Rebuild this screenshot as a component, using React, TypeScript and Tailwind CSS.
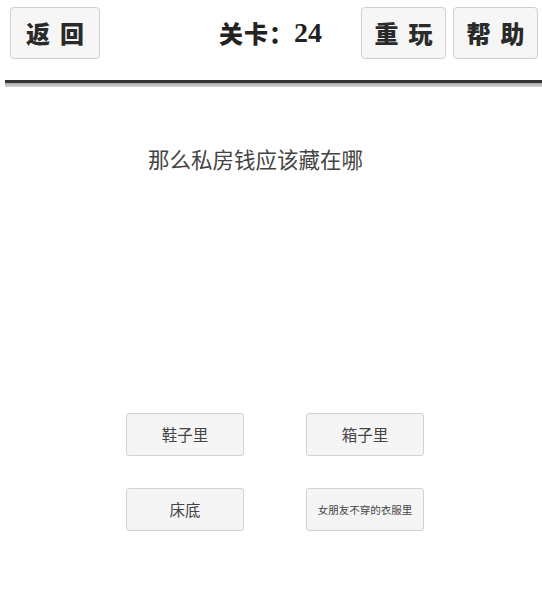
import React from 'react';

const cjk = { fontFamily: '"Noto Sans CJK SC", "Noto Sans", sans-serif' };
const heavy = { fontFamily: '"Liberation Serif", "Noto Sans CJK SC", serif' };

const TopButton = ({ label, className }: { label: string; className: string }) => (
  <button
    className={`h-[52px] flex items-center justify-center bg-[#f6f6f6] border border-[#cfcfcf] rounded-[4px] text-[#2a2a2a] text-[24px] font-black tracking-[10px] ${className}`}
    style={cjk}
  >
    <span className="pl-[10px]">{label}</span>
  </button>
);

const Option = ({ label, small }: { label: string; small?: boolean }) => (
  <button
    className={`w-[118px] h-[43px] flex items-center justify-center bg-[#f5f5f5] border border-[#d2d2d2] rounded-[3px] text-[#444] ${
      small ? 'text-[10.5px]' : 'text-[15.5px]'
    }`}
    style={cjk}
  >
    {label}
  </button>
);

export default function App() {
  return (
    <div className="w-[542px] h-[598px] bg-white overflow-hidden">
      {/* Header */}
      <div className="flex items-start pt-[7px] pl-[10px] pr-[4px]">
        <TopButton label="返回" className="w-[90px]" />
        <div className="flex-1" />
        <div className="h-[52px] flex items-center text-[#222] font-black mr-[39px]" style={heavy}>
          <span style={cjk} className="text-[24px] tracking-[1px]">关卡：</span>
          <span className="text-[28px]">24</span>
        </div>
        <TopButton label="重玩" className="w-[85px] mr-[7px]" />
        <TopButton label="帮助" className="w-[85px]" />
      </div>

      {/* Divider */}
      <div className="ml-[5px] mt-[21px]">
        <div className="h-[3px] bg-[#333]" />
        <div className="h-[4px] bg-gradient-to-b from-[#a8a8a8] to-[#d8d8d8]" />
      </div>

      {/* Question */}
      <div className="pl-[148px] mt-[57px] text-[21.5px] leading-[30px] text-[#444]" style={cjk}>
        那么私房钱应该藏在哪
      </div>

      {/* Options */}
      <div className="pl-[126px] mt-[239px] grid grid-cols-[118px_118px] gap-x-[62px] gap-y-[32px]">
        <Option label="鞋子里" />
        <Option label="箱子里" />
        <Option label="床底" />
        <Option label="女朋友不穿的衣服里" small />
      </div>
    </div>
  );
}
